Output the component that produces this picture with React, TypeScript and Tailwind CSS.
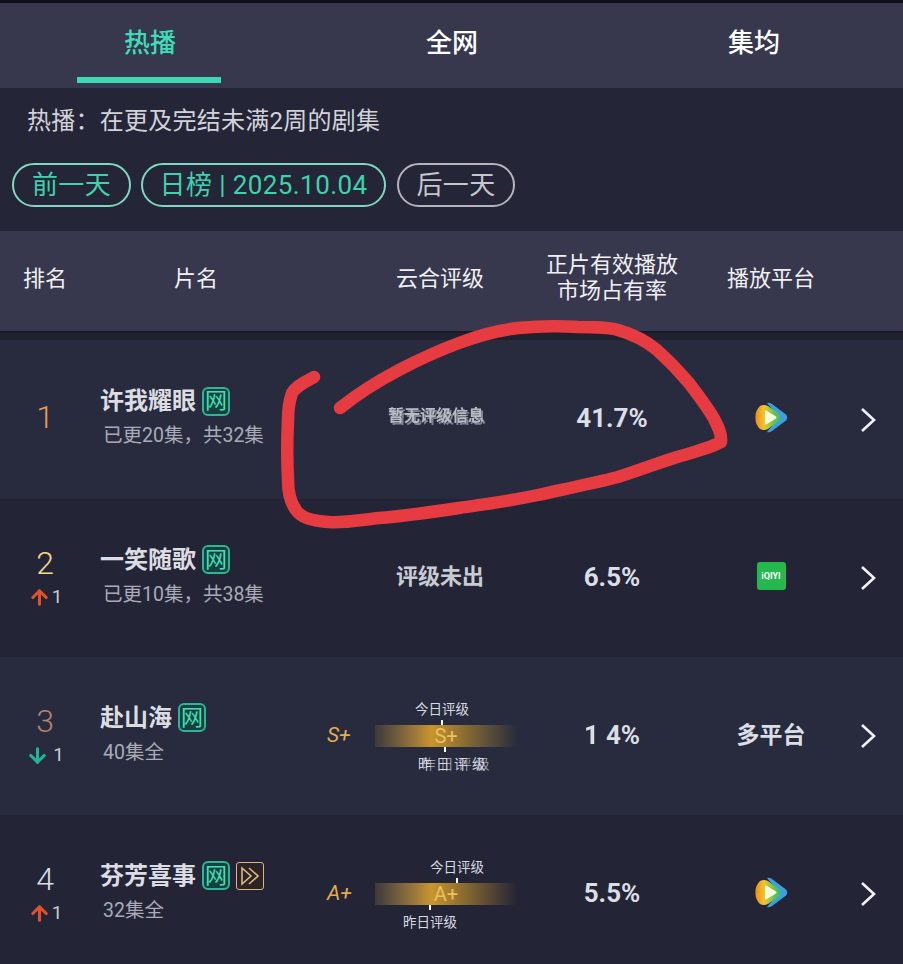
import { ArrowDown, ArrowUp } from "lucide-react";

type Row = {
  rank: string;
  rankClass: string;
  change?: "up" | "down";
  title: string;
  sub: string;
  bilibili?: boolean;
  share: React.ReactNode;
  platform: "tencent" | "iqiyi" | "multi";
  rowClass: string;
  rating: React.ReactNode;
};

function WangBadge() {
  return (
    <span className="ml-[6px] flex h-[29px] w-[28px] items-center justify-center rounded-[6px] border-2 border-[#2fb596] bg-[#15403f] text-[22px] leading-none text-[#41e0b9]">
      网
    </span>
  );
}

function SkipBadge() {
  return (
    <span className="ml-[6px] flex h-[28px] w-[28px] items-center justify-center rounded-[3px] border border-[#dcb583] bg-[#2a2428]">
      <svg width="22" height="20" viewBox="0 0 22 20" fill="none" stroke="#e2b878" strokeWidth="1.6">
        <path d="M3 2 L12 10 L3 18 Z" />
        <path d="M10 2 L19 10 L10 18" />
      </svg>
    </span>
  );
}

function TencentLogo({ id }: { id: string }) {
  return (
    <svg width="33" height="31" viewBox="0 0 33 31">
      <defs>
        <linearGradient id={id} x1="0" y1="0" x2="1" y2="0">
          <stop offset="0" stopColor="#f08a1e" />
          <stop offset="0.35" stopColor="#f0c62a" />
          <stop offset="0.75" stopColor="#62c650" />
          <stop offset="1" stopColor="#45b86a" />
        </linearGradient>
      </defs>
      <path d="M12 1 Q14 0 17 2 L31 12.5 Q33.5 15.5 31 18.5 L17 29 Q14 31 12 30 L24 15.5 Z" fill="#3c9fe2" />
      <path
        d="M5 4 Q9 2 13 4 L24 12 Q27 15.5 24 19 L13 27 Q9 29 5 27 Q0 22 0.5 15.5 Q0 9 5 4 Z"
        fill={`url(#${id})`}
      />
      <path d="M10 9.5 Q10 8 12 9 L21 14.5 Q22 15.5 21 16.5 L12 22 Q10 23 10 21.5 Z" fill="#f4fbdc" />
    </svg>
  );
}

function IqiyiLogo() {
  return (
    <span className="flex h-[28px] w-[29px] items-center justify-center rounded-[3px] bg-[#25b84f] text-[9px] font-bold leading-none text-white">
      iQIYI
    </span>
  );
}

function Chevron() {
  return (
    <svg width="18" height="26" viewBox="0 0 18 26" fill="none" stroke="#f2f2f5" strokeWidth="2.6">
      <path d="M3 2 L15 13 L3 24" />
    </svg>
  );
}

function RatingBar({
  grade,
  topLeft,
  topTick,
  bottomLeft,
  bottomTick,
  garbled,
}: {
  grade: string;
  topLeft: number;
  topTick: number;
  bottomLeft: number;
  bottomTick: number;
  garbled?: boolean;
}) {
  return (
    <div className="flex items-center pl-[7px]">
      <span className="w-[48px] text-[21px] italic text-[#e4ab50]">{grade}</span>
      <div className="relative flex h-[22px] w-[142px] items-center justify-center bg-gradient-to-r from-[#3d3a38] via-[#c9952b] via-40% to-transparent">
        <span className="text-[20px] leading-none text-[#edbe62]">{grade}</span>
        <span className="absolute top-[-5px] h-[5px] w-[2px] bg-white" style={{ left: topTick }} />
        <span className="absolute bottom-[-5px] h-[5px] w-[2px] bg-white" style={{ left: bottomTick }} />
        <span
          className="absolute top-[-25px] whitespace-nowrap text-[13.5px] leading-[18px] text-[#d8dae2]"
          style={{ left: topLeft }}
        >
          今日评级
        </span>
        {garbled ? (
          <span
            className="absolute bottom-[-26px] whitespace-nowrap text-[13.5px] leading-[18px] tracking-[4.5px] text-[#d8dae2] [text-shadow:4px_0_0_#9a9ca8]"
            style={{ left: bottomLeft }}
          >
            昨日评级
          </span>
        ) : (
          <span
            className="absolute bottom-[-26px] whitespace-nowrap text-[13.5px] leading-[18px] text-[#d8dae2]"
            style={{ left: bottomLeft }}
          >
            昨日评级
          </span>
        )}
      </div>
    </div>
  );
}

const rows: Row[] = [
  {
    rank: "1",
    rankClass: "pb-[6px] text-[#e8985a]",
    title: "许我耀眼",
    sub: "已更20集，共32集",
    share: "41.7%",
    platform: "tencent",
    rowClass: "h-[159px] bg-[#272b3d]",
    rating: (
      <div className="pb-[7px] pl-[68px] text-[16px] font-bold leading-[24px] text-[#b9bcc6] blur-[0.5px] [text-shadow:2px_2px_0_#80838f]">
        暂无评级信息
      </div>
    ),
  },
  {
    rank: "2",
    rankClass: "pb-[1px] text-[#f4d88e]",
    change: "up",
    title: "一笑随歌",
    sub: "已更10集，共38集",
    share: "6.5%",
    platform: "iqiyi",
    rowClass: "h-[158px] bg-[#232435]",
    rating: <div className="pb-[3px] pl-[76px] text-[22px] font-bold text-[#c9cbd3]">评级未出</div>,
  },
  {
    rank: "3",
    rankClass: "pb-[1px] text-[#b9826f]",
    change: "down",
    title: "赴山海",
    sub: "40集全",
    share: (
      <>
        <span className="blur-[0.5px]">1</span>
        <span className="ml-[7px]">4%</span>
      </>
    ),
    platform: "multi",
    rowClass: "h-[158px] bg-[#272b3d]",
    rating: <RatingBar grade="S+" topLeft={40} topTick={66} bottomLeft={43} bottomTick={69} garbled />,
  },
  {
    rank: "4",
    rankClass: "pb-[1px] text-[#d8dce6]",
    change: "up",
    title: "芬芳喜事",
    sub: "32集全",
    bilibili: true,
    share: "5.5%",
    platform: "tencent",
    rowClass: "h-[158px] bg-[#232435]",
    rating: <RatingBar grade="A+" topLeft={55} topTick={81} bottomLeft={28} bottomTick={54} />,
  },
];

export default function App() {
  return (
    <div className="relative h-[964px] w-[903px] overflow-hidden bg-[#232435] font-[Roboto,'Noto_Sans_CJK_SC',sans-serif]">
      <div className="h-[3px] bg-[#0f0f1a]" />

      <div className="grid h-[85px] grid-cols-[300px_304px_300px] bg-[#37384e] text-[26px] font-medium">
        <div className="relative flex items-start justify-center pt-[21px] text-[#3edcb8]">
          <span className="leading-[38px]">热播</span>
          <span className="absolute bottom-[5px] left-[77px] h-[6px] w-[144px] bg-[#3dd9b5]" />
        </div>
        <div className="flex items-start justify-center pt-[21px] text-white">
          <span className="leading-[38px]">全网</span>
        </div>
        <div className="flex items-start justify-center pt-[21px] text-white">
          <span className="leading-[38px]">集均</span>
        </div>
      </div>

      <div className="h-[143px] bg-[#242536] pl-[27px] pt-[15px]">
        <p className="text-[24px] leading-[36px] tracking-[0.25px] text-[#d2d3da]">热播：在更及完结未满2周的剧集</p>
        <div className="ml-[-15px] mt-[24px] flex gap-[10px] text-[26px] leading-none tracking-[0.4px]">
          <span className="flex h-[44px] w-[119px] items-center justify-center rounded-full border-2 border-[#7fd8c2] text-[#3ed2ae]">
            前一天
          </span>
          <span className="flex h-[44px] w-[245px] items-center justify-center rounded-full border-2 border-[#7fd8c2] text-[#3ed2ae]">
            日榜 | 2025.10.04
          </span>
          <span className="ml-[1px] flex h-[44px] w-[118px] items-center justify-center rounded-full border-2 border-[#b4b4c0] text-[#c6c6ce]">
            后一天
          </span>
        </div>
      </div>

      <div className="grid h-[100px] grid-cols-[90px_230px_210px_164px_154px] items-center bg-[#37384e] pb-[6px] text-[22px] text-[#f0f0f4]">
        <span className="text-center">排名</span>
        <span className="pl-[84px]">片名</span>
        <span className="pl-[76px]">云合评级</span>
        <span className="text-center leading-[26px]">
          正片有效播放
          <br />
          市场占有率
        </span>
        <span className="text-center">播放平台</span>
      </div>
      <div className="h-[9px] border-t-2 border-[#191a24] bg-[#20212f]" />

      {rows.map((row) => (
        <div
          key={row.rank}
          className={`grid grid-cols-[90px_230px_210px_164px_154px_40px] items-center ${row.rowClass}`}
        >
          <div className={`flex flex-col items-center ${row.rankClass}`}>
            <span className="text-[32px] font-light leading-[36px]">{row.rank}</span>
            {row.change && (
              <span className="mt-[3px] flex items-center text-[19px] leading-[26px] text-[#c9cbd4]">
                {row.change === "up" ? (
                  <ArrowUp size={23} strokeWidth={3.2} className="mr-[1px] text-[#e2512e]" />
                ) : (
                  <ArrowDown size={23} strokeWidth={3.2} className="mr-[4px] text-[#22b594]" />
                )}
                1
              </span>
            )}
          </div>
          <div className="pb-[4px] pl-[10px]">
            <div className="flex items-center">
              <span className="text-[24px] font-bold leading-[30px] text-[#dcdde3]">{row.title}</span>
              <WangBadge />
              {row.bilibili && <SkipBadge />}
            </div>
            <p className="ml-[3px] mt-[7px] whitespace-nowrap text-[19.5px] leading-[26px] text-[#a9abb7]">{row.sub}</p>
          </div>
          <div>{row.rating}</div>
          <div className="flex justify-center pb-[2px] text-[26px] font-bold text-[#dcdee5]">{row.share}</div>
          <div className="flex justify-center pb-[4px]">
            {row.platform === "tencent" && <TencentLogo id={`tv-${row.rank}`} />}
            {row.platform === "iqiyi" && <IqiyiLogo />}
            {row.platform === "multi" && <span className="pt-[4px] text-[23px] font-bold text-[#dcdee5]">多平台</span>}
          </div>
          <div className="flex justify-center">
            <Chevron />
          </div>
        </div>
      ))}

      <svg className="pointer-events-none absolute left-0 top-0" width="903" height="964" fill="none">
        <path
          d="M340 408 C360 392 380 380 399 370 C420 359 440 350 459 343 C480 335 500 330 518 328 C540 326 560 326 578 327 C595 327 608 327 618 330 C632 334 645 340 657 350 C668 360 678 370 689 383 C698 395 706 405 713 417 C718 426 722 434 721 442 C710 448 695 452 677 457 C658 463 640 470 618 477 C590 484 565 489 538 495 C510 501 485 504 459 508 C432 512 405 516 379 518 C360 520 345 523 328 522 C312 521 301 518 296 510 C290 502 288 492 288 480 C287 460 287 440 288 420 C288 410 289 402 292 393 C296 386 305 382 314 377"
          stroke="#e63b40"
          strokeWidth="12.5"
          strokeLinecap="round"
          strokeLinejoin="round"
        />
      </svg>
    </div>
  );
}
